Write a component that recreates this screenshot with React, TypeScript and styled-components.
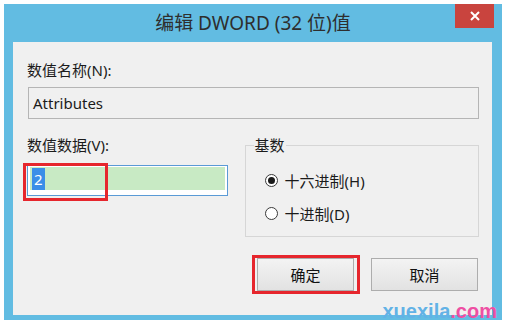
import styled, { createGlobalStyle } from "styled-components";

const GlobalStyle = createGlobalStyle`
  body {
    margin: 0;
    background: #fff;
    font-family: "Noto Sans", "Noto Sans CJK SC", sans-serif;
    color: #1b1b1b;
  }
  * { box-sizing: border-box; }
`;

const Page = styled.div`
  position: relative;
  width: 505px;
  height: 323px;
  padding: 4px 3px 3px 4px;
`;

const Window = styled.div`
  width: 498px;
  height: 316px;
  background: #62bce2;
  display: flex;
  flex-direction: column;
`;

const TitleBar = styled.div`
  height: 38px;
  display: grid;
  grid-template-columns: 1fr auto 1fr;
`;

const Title = styled.div`
  grid-column: 2;
  font-size: 19px;
  line-height: 38px;
  color: #2e2e2e;
  white-space: nowrap;
`;

const CloseButton = styled.div`
  grid-column: 3;
  justify-self: end;
  width: 39px;
  height: 24px;
  margin-right: 8px;
  background: #c9443e;
  display: grid;
  place-items: center;
`;

const Content = styled.div`
  flex: 1;
  margin: 0 10px 5px 9px;
  background: #f0f0f0;
  padding: 19px 13px 0 14px;
  display: flex;
  flex-direction: column;
`;

const Label = styled.div`
  font-size: 15px;
  line-height: 18px;
  height: 18px;
  white-space: nowrap;
`;

const NameBox = styled.div`
  margin: 8px 0 0 1px;
  width: 451px;
  height: 32px;
  border: 1px solid #b5b5b5;
  background: #f0f0f0;
  padding-left: 4px;
  font-size: 15px;
  line-height: 30px;
`;

const DataRow = styled.div`
  display: flex;
  margin-top: 17px;
`;

const LeftCol = styled.div`
  width: 201px;
  display: flex;
  flex-direction: column;
`;

const DataInput = styled.div`
  position: relative;
  margin-top: 11px;
  height: 31px;
  border: 1px solid #5a9ad6;
  background: #fff;
  padding: 1px 2px 5px 2px;
`;

const Fill = styled.div`
  height: 23px;
  background: #c8eac4;
  display: flex;
  align-items: center;
  padding-left: 2px;
`;

const Selected = styled.span`
  background: #3a8ee8;
  color: #fff;
  font-size: 15px;
  line-height: 22px;
  padding: 0 2px;
`;

const Marker = styled.div<{ $inset: string }>`
  position: absolute;
  inset: ${(p) => p.$inset};
  border: 3px solid #e6262d;
  pointer-events: none;
`;

const Group = styled.fieldset`
  margin: 0 0 0 17px;
  width: 235px;
  height: 101px;
  border: 1px solid #d6d6d6;
  padding: 0 0 0 8px;
`;

const Legend = styled.legend`
  padding: 0 1px;
  font-size: 15px;
  line-height: 18px;
`;

const RadioList = styled.div`
  display: flex;
  flex-direction: column;
  gap: 11px;
  margin: 15px 0 0 11px;
`;

const RadioRow = styled.div`
  display: flex;
  align-items: center;
  gap: 7px;
  height: 22px;
  font-size: 15px;
  white-space: nowrap;
`;

const RadioCircle = styled.span<{ $checked?: boolean }>`
  width: 13px;
  height: 13px;
  border-radius: 50%;
  border: 1px solid #3a3a3a;
  background: #fff;
  display: grid;
  place-items: center;

  &::after {
    content: "";
    width: 7px;
    height: 7px;
    border-radius: 50%;
    background: ${(p) => (p.$checked ? "#1a1a1a" : "transparent")};
  }
`;

const ButtonRow = styled.div`
  display: flex;
  justify-content: flex-end;
  gap: 17px;
  margin: 21px 1px 0 0;
`;

const ButtonWrap = styled.div`
  position: relative;
`;

const Button = styled.div<{ $width: number }>`
  width: ${(p) => p.$width}px;
  height: 33px;
  border: 1px solid #adadad;
  background: linear-gradient(#f3f3f3, #e2e2e2);
  display: grid;
  place-items: center;
  font-size: 15px;
  color: #111;
`;

const Watermark = styled.div`
  position: absolute;
  top: 301px;
  right: 8px;
  font-family: "Liberation Sans", Arial, sans-serif;
  font-weight: 700;
  font-size: 20px;
  line-height: 20px;
  color: #62b2e6;
`;

const Pink = styled.span`
  color: #ee4fa3;
`;

export default function App() {
  return (
    <Page>
      <GlobalStyle />
      <Window>
        <TitleBar>
          <Title>编辑 DWORD (32 位)值</Title>
          <CloseButton>
            <svg width="10" height="10" viewBox="0 0 10 10">
              <path d="M1 1 L9 9 M9 1 L1 9" stroke="#fff" strokeWidth="2" />
            </svg>
          </CloseButton>
        </TitleBar>
        <Content>
          <Label>数值名称(N):</Label>
          <NameBox>Attributes</NameBox>
          <DataRow>
            <LeftCol>
              <Label>数值数据(V):</Label>
              <DataInput>
                <Fill>
                  <Selected>2</Selected>
                </Fill>
                <Marker $inset="-3px auto auto -5px" style={{ width: 85, height: 38 }} />
              </DataInput>
            </LeftCol>
            <Group>
              <Legend>基数</Legend>
              <RadioList>
                <RadioRow>
                  <RadioCircle $checked />
                  十六进制(H)
                </RadioRow>
                <RadioRow>
                  <RadioCircle />
                  十进制(D)
                </RadioRow>
              </RadioList>
            </Group>
          </DataRow>
          <ButtonRow>
            <ButtonWrap>
              <Button $width={97}>确定</Button>
              <Marker $inset="-3px -6px -3px -5px" />
            </ButtonWrap>
            <Button $width={107}>取消</Button>
          </ButtonRow>
        </Content>
      </Window>
      <Watermark>
        xuexila<Pink>.com</Pink>
      </Watermark>
    </Page>
  );
}
